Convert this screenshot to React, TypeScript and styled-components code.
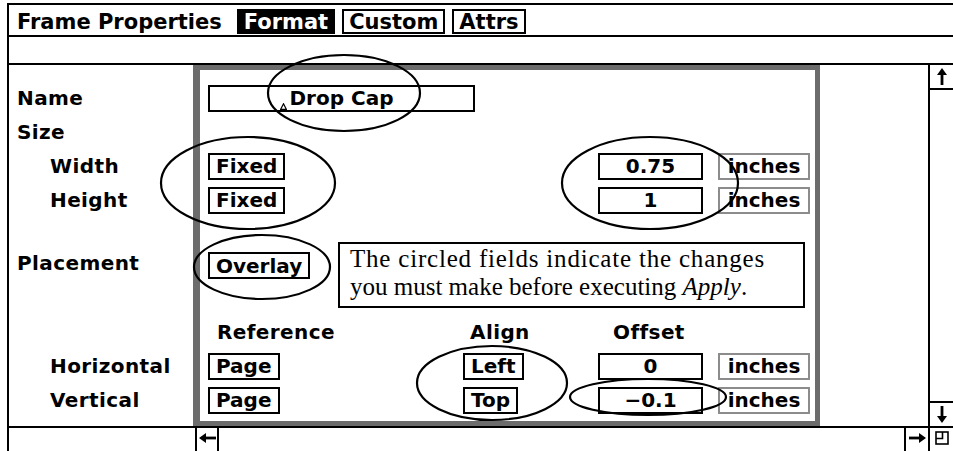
import { FC } from "react";
import styled, { createGlobalStyle } from "styled-components";

const GlobalStyle = createGlobalStyle`
  html, body {
    margin: 0;
    padding: 0;
    background: #fff;
  }
  body {
    font-family: "DejaVu Sans", "Liberation Sans", sans-serif;
    color: #000;
  }
`;

const Page = styled.div`
  position: relative;
  width: 953px;
  height: 451px;
  padding: 3px 0 0 7px;
  box-sizing: border-box;
  overflow: hidden;
`;

const Window = styled.div`
  display: flex;
  flex-direction: column;
  height: 100%;
  box-sizing: border-box;
  border-left: 2px solid #000;
  border-top: 2px solid #000;
`;

const TitleBar = styled.div`
  display: flex;
  align-items: center;
  gap: 7px;
  flex: none;
  height: 32px;
  box-sizing: border-box;
  padding: 3px 0 0 8px;
  border-bottom: 2px solid #000;
`;

const Title = styled.span`
  font-size: 21px;
  font-weight: bold;
  margin-right: 8px;
`;

const Tab = styled.div<{ $active?: boolean }>`
  height: 25px;
  box-sizing: border-box;
  display: flex;
  align-items: center;
  padding: 0 5px;
  border: 2px solid #000;
  font-size: 21px;
  font-weight: bold;
  background: ${(p) => (p.$active ? "#000" : "#fff")};
  color: ${(p) => (p.$active ? "#fff" : "#000")};
`;

const MessageBar = styled.div`
  flex: none;
  height: 28px;
  box-sizing: border-box;
  border-bottom: 2px solid #000;
`;

const Content = styled.div`
  display: flex;
  flex: none;
  height: 363px;
  box-sizing: border-box;
  border-bottom: 2px solid #000;
`;

const LabelColumn = styled.div`
  width: 184px;
  flex: none;
  padding-top: 16px;
  box-sizing: border-box;
`;

const LabelRow = styled.div<{ $h: number; $mt?: number; $indent?: boolean; $top?: boolean }>`
  display: flex;
  align-items: ${(p) => (p.$top ? "flex-start" : "center")};
  height: ${(p) => p.$h}px;
  margin-top: ${(p) => p.$mt ?? 0}px;
  padding-left: ${(p) => (p.$indent ? 41 : 8)}px;
  padding-top: ${(p) => (p.$top ? 8 : 0)}px;
  box-sizing: border-box;
  font-size: 20px;
  font-weight: bold;
  letter-spacing: 0.4px;
  line-height: 27px;
`;

const Frame = styled.div`
  width: 627px;
  flex: none;
  box-sizing: border-box;
  border-style: solid;
  border-color: #6c6c6c;
  border-width: 5px 5px 5px 7px;
  padding: 11px 0 0 8px;
`;

const FieldRow = styled.div<{ $h: number; $mt?: number }>`
  display: grid;
  grid-template-columns: 255px 135px 120px 92px;
  align-items: center;
  height: ${(p) => p.$h}px;
  margin-top: ${(p) => p.$mt ?? 0}px;
`;

const PlacementRow = styled.div`
  display: grid;
  grid-template-columns: 130px auto;
  align-items: start;
  height: 66px;
  margin-top: 25px;
`;

const Box = styled.div<{ $w?: number; $span?: number }>`
  position: relative;
  box-sizing: border-box;
  height: 27px;
  width: ${(p) => (p.$w ? `${p.$w}px` : "fit-content")};
  grid-column: ${(p) => (p.$span ? `span ${p.$span}` : "auto")};
  display: flex;
  align-items: center;
  justify-content: center;
  padding: 0 6px;
  border: 2px solid #000;
  font-size: 20px;
  font-weight: bold;
  line-height: 1;
  white-space: nowrap;
`;

const UnitBox = styled(Box)`
  border-color: #8c8c8c;
`;

const OverlayBox = styled(Box)`
  margin-top: 10px;
`;

const Caret = styled.svg`
  position: absolute;
  left: 70px;
  top: 16px;
`;

const Heading = styled.div<{ $pl: number }>`
  padding-left: ${(p) => p.$pl}px;
  font-size: 20px;
  font-weight: bold;
  letter-spacing: 0.4px;
`;

const Callout = styled.div`
  width: 467px;
  height: 66px;
  box-sizing: border-box;
  border: 2px solid #000;
  padding: 1px 10px;
  font-family: "Liberation Serif", "Times New Roman", serif;
  font-size: 25px;
  line-height: 28px;
  white-space: nowrap;
`;

const CalloutLine = styled.div<{ $ls?: number }>`
  letter-spacing: ${(p) => p.$ls ?? 0}px;
`;

const Blank = styled.div`
  flex: 1;
`;

const Scrollbar = styled.div`
  width: 25px;
  flex: none;
  display: flex;
  flex-direction: column;
  justify-content: space-between;
  box-sizing: border-box;
  border-left: 2px solid #000;
`;

const ScrollButton = styled.div<{ $end?: boolean }>`
  height: 25px;
  box-sizing: border-box;
  display: flex;
  align-items: center;
  justify-content: center;
  border-bottom: ${(p) => (p.$end ? "none" : "2px solid #000")};
  border-top: ${(p) => (p.$end ? "2px solid #000" : "none")};
`;

const BottomBar = styled.div`
  display: flex;
  flex: 1;
`;

const BottomLead = styled.div`
  width: 186px;
  flex: none;
`;

const ArrowCell = styled.div<{ $w: number; $right?: boolean }>`
  width: ${(p) => p.$w}px;
  flex: none;
  box-sizing: border-box;
  display: flex;
  align-items: center;
  justify-content: center;
  border-left: 2px solid #000;
  border-right: ${(p) => (p.$right ? "2px solid #000" : "none")};
  padding-bottom: 4px;
`;

const Annotations = styled.svg`
  position: absolute;
  left: 0;
  top: 0;
  pointer-events: none;
`;

const UpArrow: FC<{ down?: boolean }> = ({ down }) => (
  <svg width="10" height="17" viewBox="0 0 10 17" style={down ? { transform: "rotate(180deg)" } : undefined}>
    <polygon points="5,0 10,7 0,7" fill="#000" />
    <rect x="3.6" y="6" width="2.8" height="11" fill="#000" />
  </svg>
);

const SideArrow: FC<{ right?: boolean }> = ({ right }) => (
  <svg width="17" height="10" viewBox="0 0 17 10" style={right ? { transform: "rotate(180deg)" } : undefined}>
    <polygon points="0,5 7,0 7,10" fill="#000" />
    <rect x="6" y="3.6" width="11" height="2.8" fill="#000" />
  </svg>
);

const ZoomBox: FC = () => (
  <svg width="14" height="14" viewBox="0 0 14 14">
    <rect x="1" y="1" width="12" height="12" fill="none" stroke="#000" strokeWidth="1.6" />
    <path d="M1 7.5 H7.5 V1" fill="none" stroke="#000" strokeWidth="1.6" />
  </svg>
);

// circled fields, in page coordinates
const ellipses = [
  { cx: 344, cy: 93, rx: 76, ry: 38 },
  { cx: 248, cy: 183, rx: 87, ry: 46 },
  { cx: 650, cy: 183, rx: 88, ry: 46 },
  { cx: 262, cy: 267, rx: 68, ry: 32 },
  { cx: 492, cy: 383, rx: 75, ry: 37 },
  { cx: 648, cy: 397, rx: 78, ry: 18 },
];

const App: FC = () => (
  <>
    <GlobalStyle />
    <Page>
      <Window>
        <TitleBar>
          <Title>Frame Properties</Title>
          <Tab $active>Format</Tab>
          <Tab>Custom</Tab>
          <Tab>Attrs</Tab>
        </TitleBar>
        <MessageBar />
        <Content>
          <LabelColumn>
            <LabelRow $h={34}>Name</LabelRow>
            <LabelRow $h={34}>Size</LabelRow>
            <LabelRow $h={34} $indent>Width</LabelRow>
            <LabelRow $h={34} $indent>Height</LabelRow>
            <LabelRow $h={66} $mt={25} $top>Placement</LabelRow>
            <LabelRow $h={34} $mt={7} />
            <LabelRow $h={34} $indent>Horizontal</LabelRow>
            <LabelRow $h={34} $indent>Vertical</LabelRow>
          </LabelColumn>

          <Frame>
            <FieldRow $h={34}>
              <Box $w={267} $span={2}>
                <Caret width="7" height="7" viewBox="0 0 7 7">
                  <polygon points="3.5,0.8 6.3,6.3 0.7,6.3" fill="none" stroke="#000" strokeWidth="1.2" />
                </Caret>
                Drop Cap
              </Box>
            </FieldRow>
            <FieldRow $h={34} />
            <FieldRow $h={34}>
              <Box>Fixed</Box>
              <span />
              <Box $w={105}>0.75</Box>
              <UnitBox $w={92}>inches</UnitBox>
            </FieldRow>
            <FieldRow $h={34}>
              <Box>Fixed</Box>
              <span />
              <Box $w={105}>1</Box>
              <UnitBox $w={92}>inches</UnitBox>
            </FieldRow>
            <PlacementRow>
              <OverlayBox>Overlay</OverlayBox>
              <Callout>
                <CalloutLine $ls={0.8}>The circled fields indicate the changes</CalloutLine>
                <CalloutLine>
                  you must make before executing <i>Apply</i>.
                </CalloutLine>
              </Callout>
            </PlacementRow>
            <FieldRow $h={34} $mt={7}>
              <Heading $pl={9}>Reference</Heading>
              <Heading $pl={7}>Align</Heading>
              <Heading $pl={15}>Offset</Heading>
            </FieldRow>
            <FieldRow $h={34}>
              <Box>Page</Box>
              <Box>Left</Box>
              <Box $w={105}>0</Box>
              <UnitBox $w={92}>inches</UnitBox>
            </FieldRow>
            <FieldRow $h={34}>
              <Box>Page</Box>
              <Box>Top</Box>
              <Box $w={105}>−0.1</Box>
              <UnitBox $w={92}>inches</UnitBox>
            </FieldRow>
          </Frame>

          <Blank />

          <Scrollbar>
            <ScrollButton>
              <UpArrow />
            </ScrollButton>
            <ScrollButton $end>
              <UpArrow down />
            </ScrollButton>
          </Scrollbar>
        </Content>
        <BottomBar>
          <BottomLead />
          <ArrowCell $w={24} $right>
            <SideArrow />
          </ArrowCell>
          <Blank />
          <ArrowCell $w={24}>
            <SideArrow right />
          </ArrowCell>
          <ArrowCell $w={25}>
            <ZoomBox />
          </ArrowCell>
        </BottomBar>
      </Window>

      <Annotations width="953" height="451" viewBox="0 0 953 451">
        {ellipses.map((e, i) => (
          <ellipse key={i} cx={e.cx} cy={e.cy} rx={e.rx} ry={e.ry} fill="none" stroke="#000" strokeWidth="2.2" />
        ))}
      </Annotations>
    </Page>
  </>
);

export default App;
